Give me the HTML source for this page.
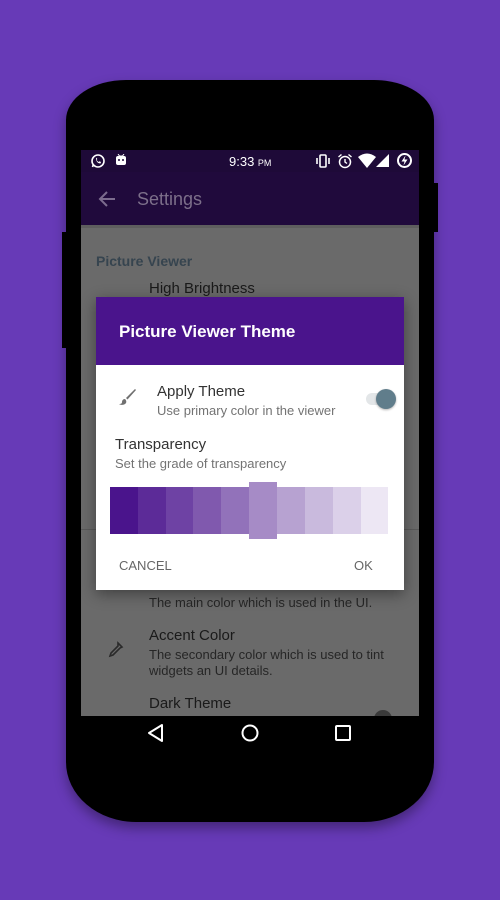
<!DOCTYPE html>
<html><head><meta charset="utf-8"><style>
*{margin:0;padding:0;box-sizing:border-box}
body{width:500px;height:900px;background:#673ab7;position:relative;overflow:hidden;font-family:"Liberation Sans",sans-serif}
.phone{position:absolute;left:66px;top:80px;width:368px;height:742px;background:#000;border-radius:60px 60px 70px 70px/40px 40px 60px 60px;box-shadow:0 6px 12px rgba(0,0,0,.35)}
.btn{position:absolute;background:#000}
.screen{position:absolute;left:81px;top:150px;width:338px;height:566px;background:#6a6a6a;overflow:hidden}
.sb{position:absolute;left:0;top:0;width:338px;height:22px;background:#1e0a38;color:#fff;font-size:12px}
.tb{position:absolute;left:0;top:22px;width:338px;height:53px;background:#200a3c}
.t{position:absolute;white-space:nowrap}
.dlg{position:absolute;left:96px;top:297px;width:308px;height:293px;background:#fff;box-shadow:0 4px 14px rgba(0,0,0,.4)}
.dh{height:68px;background:#4a148c;color:#fff;font-weight:bold;font-size:17px;padding:25px 0 0 23px}
.sw{position:absolute;top:487px;height:47px;width:28px}
</style></head><body>
<div class="btn" style="left:434px;top:183px;width:4px;height:49px"></div>
<div class="btn" style="left:62px;top:232px;width:4px;height:116px"></div>
<div class="phone"></div>
<div class="screen">
 <div class="sb">
  <svg style="position:absolute;left:9px;top:3px" width="16" height="16" viewBox="0 0 16 16"><circle cx="8" cy="8" r="6" fill="none" stroke="#fff" stroke-width="1.6"/><path d="M2.5 14l1-3" stroke="#fff" stroke-width="1.6"/><path d="M6 5.5c0 3 2 5 4.5 5l.5-1.5-1.5-.7-.7.7c-1-.4-1.8-1.2-2.2-2.2l.7-.7-.7-1.5z" fill="#fff"/></svg>
  <svg style="position:absolute;left:34px;top:4px" width="12" height="12" viewBox="0 0 12 12"><path d="M3 0l1.5 2h3L9 0" stroke="#fff" fill="none"/><rect x="1" y="2" width="10" height="9" rx="2" fill="#fff"/><circle cx="4" cy="6" r="1" fill="#1e0a38"/><circle cx="8" cy="6" r="1" fill="#1e0a38"/></svg>
  <div class="t" style="left:148px;top:4px;font-size:13px">9:33 <span style="font-size:9px">PM</span></div>
  <svg style="position:absolute;left:234px;top:3px" width="16" height="16" viewBox="0 0 16 16"><rect x="5" y="2" width="6" height="12" rx="1" fill="none" stroke="#fff" stroke-width="1.6"/><path d="M2 5v6M14 5v6" stroke="#fff" stroke-width="1.6"/></svg>
  <svg style="position:absolute;left:256px;top:3px" width="16" height="16" viewBox="0 0 16 16"><circle cx="8" cy="9" r="5.5" fill="none" stroke="#fff" stroke-width="1.5"/><path d="M8 6v3l2 1.5M1.5 4l3-2.5M14.5 4l-3-2.5" stroke="#fff" stroke-width="1.4" fill="none"/></svg>
  <svg style="position:absolute;left:277px;top:3px" width="18" height="16" viewBox="0 0 18 16"><path d="M0 4Q9-3 18 4L9 15z" fill="#fff"/></svg>
  <svg style="position:absolute;left:295px;top:4px" width="13" height="13" viewBox="0 0 13 13"><path d="M13 0V13H0z" fill="#fff"/></svg>
  <svg style="position:absolute;left:315px;top:2px" width="17" height="17" viewBox="0 0 17 17"><circle cx="8.5" cy="8.5" r="6.5" fill="none" stroke="#fff" stroke-width="2"/><path d="M9.5 3.5L5.5 9.5h3l-1 4 4-6h-3z" fill="#fff"/></svg>
 </div>
 <div class="tb">
  <svg style="position:absolute;left:16px;top:17px" width="20" height="20" viewBox="0 0 20 20"><path d="M18 10H3M10 3L3 10l7 7" stroke="#7c6c8e" stroke-width="2" fill="none"/></svg>
  <div class="t" style="left:56px;top:17px;font-size:18px;color:#7c6f8a">Settings</div>
 </div>
 <div style="position:absolute;left:0;top:75px;width:338px;height:3px;background:#5e5e5e"></div>
 <div class="t" style="left:15px;top:103px;font-size:14px;font-weight:bold;color:#36444f">Picture Viewer</div>
 <div class="t" style="left:68px;top:130px;font-size:15px;color:#1a1a1a">High Brightness</div>
 <div style="position:absolute;left:0;top:379px;width:338px;height:1px;background:#5a5a5a"></div>
 <div style="position:absolute;left:290px;top:335px;width:16px;height:16px;border-radius:50%;background:#263238"></div>
 <div class="t" style="left:68px;top:445px;font-size:13px;color:#262626">The main color which is used in the UI.</div>
 <div class="t" style="left:68px;top:477px;font-size:15px;color:#1a1a1a">Accent Color</div>
 <div class="t" style="left:68px;top:497px;font-size:13px;color:#262626;line-height:16px">The secondary color which is used to tint<br>widgets an UI details.</div>
 <svg style="position:absolute;left:24px;top:490px" width="20" height="20" viewBox="0 0 20 20"><path d="M13 3l4 4-2 1-7 7-3 1 1-3 7-7z" fill="none" stroke="#2a2a2a" stroke-width="1.6"/></svg>
 <div class="t" style="left:68px;top:545px;font-size:15px;color:#1a1a1a">Dark Theme</div>
 <div style="position:absolute;left:293px;top:560px;width:18px;height:18px;border-radius:50%;background:#3a3a3a"></div>
</div>
<div class="dlg">
 <div class="dh">Picture Viewer Theme</div>
 <svg style="position:absolute;left:20px;top:89px" width="22" height="22" viewBox="0 0 22 22"><path d="M19 3L10 12l1.5 1.5L20 4z" fill="#707070"/><path d="M9 13c-2 0-3 1.5-3 3s-1 2-3 2c2 1.5 6 1 7-1 .5-1 .5-2.5-1-4z" fill="#707070"/></svg>
 <div class="t" style="left:61px;top:86px;font-size:15px;color:#333">Apply Theme</div>
 <div class="t" style="left:61px;top:106px;font-size:13px;color:#737373">Use primary color in the viewer</div>
 <div style="position:absolute;left:270px;top:96px;width:30px;height:12px;border-radius:6px;background:#e3e6e8"></div>
 <div style="position:absolute;left:280px;top:92px;width:20px;height:20px;border-radius:50%;background:#607d8b;box-shadow:0 1px 2px rgba(0,0,0,.3)"></div>
 <div class="t" style="left:19px;top:139px;font-size:15px;color:#333">Transparency</div>
 <div class="t" style="left:19px;top:159px;font-size:13px;color:#737373">Set the grade of transparency</div>
 <div class="t" style="left:23px;top:261px;font-size:13px;color:#666">CANCEL</div>
 <div class="t" style="left:258px;top:261px;font-size:13px;color:#666">OK</div>
</div>
<div class="sw" style="left:110px;background:#4a148c"></div>
<div class="sw" style="left:138px;background:#5c2b98"></div>
<div class="sw" style="left:166px;background:#6e42a4"></div>
<div class="sw" style="left:193px;background:#8059ae"></div>
<div class="sw" style="left:221px;background:#9272ba"></div>
<div class="sw" style="left:249px;top:482px;height:57px;background:#a68bc6"></div>
<div class="sw" style="left:277px;background:#b7a2d1"></div>
<div class="sw" style="left:305px;background:#c9badd"></div>
<div class="sw" style="left:333px;background:#dbd0e9"></div>
<div class="sw" style="left:361px;width:27px;background:#ede7f4"></div>
<svg style="position:absolute;left:146px;top:723px" width="20" height="20" viewBox="0 0 20 20"><path d="M16 2L3 10l13 8z" fill="none" stroke="#fff" stroke-width="2" stroke-linejoin="round"/></svg>
<svg style="position:absolute;left:240px;top:723px" width="20" height="20" viewBox="0 0 20 20"><circle cx="10" cy="10" r="7.5" fill="none" stroke="#fff" stroke-width="2"/></svg>
<svg style="position:absolute;left:334px;top:724px" width="18" height="18" viewBox="0 0 18 18"><rect x="2" y="2" width="14" height="14" rx="1" fill="none" stroke="#fff" stroke-width="2"/></svg>
</body></html>
